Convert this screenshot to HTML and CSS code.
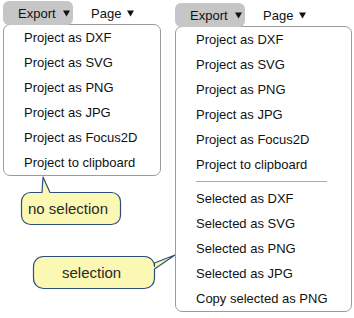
FILE: index.html
```html
<!DOCTYPE html>
<html>
<head>
<meta charset="utf-8">
<link rel="stylesheet" href="styles.css">
</head>
<body>
<div class="stage">
  <div class="panel panel-left">
    <div class="menubar">
      <div class="btn">Export <svg class="tri" width="7" height="7" viewBox="0 0 7 7"><path d="M0 0.5 H7 L3.5 6.5 Z"/></svg></div>
      <div class="label">Page <svg class="tri" width="7" height="7" viewBox="0 0 7 7"><path d="M0 0.5 H7 L3.5 6.5 Z"/></svg></div>
    </div>
    <div class="menu">
      <div class="item">Project as DXF</div>
      <div class="item">Project as SVG</div>
      <div class="item">Project as PNG</div>
      <div class="item">Project as JPG</div>
      <div class="item">Project as Focus2D</div>
      <div class="item">Project to clipboard</div>
    </div>
  </div>
  <div class="panel panel-right">
    <div class="menubar">
      <div class="btn">Export <svg class="tri" width="7" height="7" viewBox="0 0 7 7"><path d="M0 0.5 H7 L3.5 6.5 Z"/></svg></div>
      <div class="label">Page <svg class="tri" width="7" height="7" viewBox="0 0 7 7"><path d="M0 0.5 H7 L3.5 6.5 Z"/></svg></div>
    </div>
    <div class="menu">
      <div class="item">Project as DXF</div>
      <div class="item">Project as SVG</div>
      <div class="item">Project as PNG</div>
      <div class="item">Project as JPG</div>
      <div class="item">Project as Focus2D</div>
      <div class="item">Project to clipboard</div>
      <div class="sep"></div>
      <div class="item">Selected as DXF</div>
      <div class="item">Selected as SVG</div>
      <div class="item">Selected as PNG</div>
      <div class="item">Selected as JPG</div>
      <div class="item">Copy selected as PNG</div>
    </div>
  </div>

  <div class="callout callout-none">
    <svg class="bubble" width="100" height="33" viewBox="0 0 100 33">
      <path d="M9.5 0.5 L21 0.5 L22 -15 L29 0.5 L90.5 0.5 A9 9 0 0 1 99.5 9.5 L99.5 23.5 A9 9 0 0 1 90.5 32.5 L9.5 32.5 A9 9 0 0 1 0.5 23.5 L0.5 9.5 A9 9 0 0 1 9.5 0.5 Z"/>
    </svg>
    <span class="ctext">no selection</span>
  </div>

  <div class="callout callout-sel">
    <svg class="bubble" width="122" height="33" viewBox="0 0 122 33">
      <path d="M10.5 0.5 L111.5 0.5 A10 10 0 0 1 121.5 10.5 L121.5 7 L142 -1 L121.5 13 L121.5 22.5 A10 10 0 0 1 111.5 32.5 L10.5 32.5 A10 10 0 0 1 0.5 22.5 L0.5 10.5 A10 10 0 0 1 10.5 0.5 Z"/>
    </svg>
    <span class="ctext">selection</span>
  </div>
</div>
</body>
</html>
```

FILE: styles.css
```css
html, body {
  margin: 0;
  padding: 0;
  background: #ffffff;
}

body {
  font-family: "Liberation Sans", Arial, sans-serif;
  font-size: 13px;
  color: #111111;
}

.stage {
  position: relative;
  display: flex;
  align-items: flex-start;
  gap: 14px;
  padding: 1px 0 0 3px;
  height: 318px;
  box-sizing: border-box;
}

.panel-left {
  width: 158px;
}

.panel-right {
  width: 177px;
  margin-top: 2px;
}

.menubar {
  display: flex;
  align-items: center;
  height: 24px;
  position: relative;
  z-index: 2;
}

.btn {
  width: 70px;
  height: 24px;
  box-sizing: border-box;
  padding-left: 15px;
  background: #c6c6c6;
  border-radius: 6px;
  display: flex;
  align-items: center;
  gap: 7px;
}

.label {
  margin-left: 18px;
  display: flex;
  align-items: center;
  gap: 6px;
}

.tri {
  display: block;
  fill: #111111;
}

.menu {
  margin-top: -1px;
  border: 1px solid #9c9c9c;
  border-radius: 7px;
  background: #ffffff;
  position: relative;
  z-index: 1;
}

.item {
  height: 25px;
  line-height: 25px;
  padding-left: 20px;
  white-space: nowrap;
}

.sep {
  height: 9px;
  margin: 0 24px 0 20px;
  position: relative;
}

.sep::after {
  content: "";
  position: absolute;
  left: 0;
  right: 0;
  top: 4px;
  height: 1px;
  background: #aaaaaa;
}

.callout {
  position: absolute;
  height: 33px;
  font-size: 15px;
  line-height: 33px;
  color: #2a2a2a;
}

.bubble {
  position: absolute;
  left: 0;
  top: 0;
  overflow: visible;
}

.bubble path {
  fill: #faf8b2;
  stroke: #2e4f7e;
  stroke-width: 1.2;
  stroke-linejoin: round;
}

.ctext {
  position: relative;
  white-space: nowrap;
}

.callout-none {
  left: 21px;
  top: 192px;
  width: 100px;
  padding-left: 7px;
  box-sizing: border-box;
}

.callout-sel {
  left: 33px;
  top: 256px;
  width: 122px;
  padding-left: 29px;
  box-sizing: border-box;
}
```
